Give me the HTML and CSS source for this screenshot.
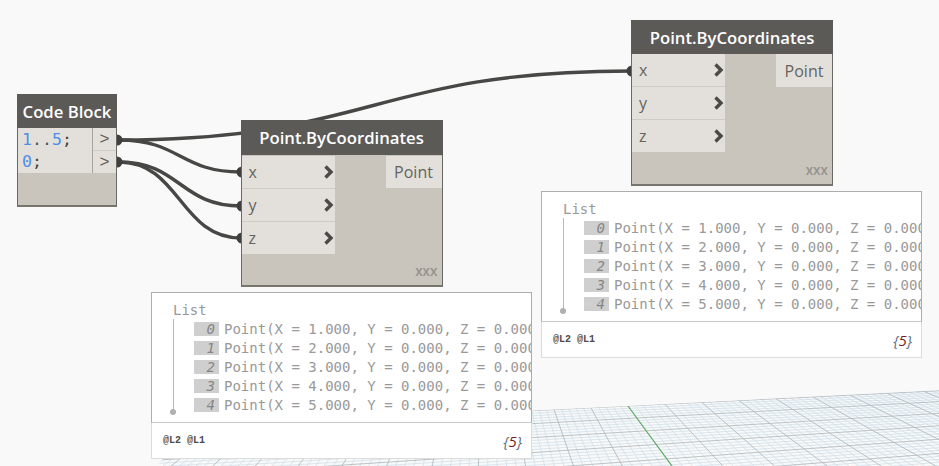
FILE: index.html
```html
<!DOCTYPE html>
<html lang="en">
<head>
<meta charset="utf-8">
<title>Point.ByCoordinates</title>
<link rel="stylesheet" href="styles.css">
</head>
<body>
<main class="canvas">
  <svg class="grid" id="grid" width="939" height="466" viewBox="0 0 939 466" aria-hidden="true"></svg>

  <svg class="wires" width="939" height="466" viewBox="0 0 939 466" aria-hidden="true">
    <path class="wire" d="M119 140C370 140 375 71 631 71"/>
    <path class="wire" d="M119 140C180 140 180 172 241 172"/>
    <path class="wire" d="M119 162C180 162 180 206 241 206"/>
    <path class="wire" d="M119 162C180 162 180 238 241 238"/>
    <path class="dot" d="M117 134.500a5.500 5.500 0 0 1 0 11zM117 156.500a5.500 5.500 0 0 1 0 11z"/>
    <path class="dot" d="M242 166.500a5.500 5.500 0 0 0 0 11zM242 200.500a5.500 5.500 0 0 0 0 11zM242 232.500a5.500 5.500 0 0 0 0 11zM632 65.500a5.500 5.500 0 0 0 0 11z"/>
  </svg>

  <section class="node code-node">
    <header class="node-title">Code Block</header>
    <div class="code-body">
      <div class="code-text">
        <div class="code-line"><span class="num">1</span>..<span class="num">5</span><span class="semi">;</span></div>
        <div class="code-line"><span class="num">0</span><span class="semi">;</span></div>
      </div>
      <div class="code-ports">
        <div class="code-port">&gt;</div>
        <div class="code-port">&gt;</div>
      </div>
    </div>
  </section>

  <section class="node point-node point-a">
    <header class="node-title">Point.ByCoordinates</header>
    <div class="point-body">
      <div class="inputs">
        <div class="input"><span>x</span><svg class="chev" viewBox="0 0 10 14"><path d="M2 1.500l5.500 5.500-5.500 5.500"/></svg></div>
        <div class="input"><span>y</span><svg class="chev" viewBox="0 0 10 14"><path d="M2 1.500l5.500 5.500-5.500 5.500"/></svg></div>
        <div class="input"><span>z</span><svg class="chev" viewBox="0 0 10 14"><path d="M2 1.500l5.500 5.500-5.500 5.500"/></svg></div>
      </div>
      <div class="output">Point</div>
      <div class="lacing">xxx</div>
    </div>
  </section>

  <section class="node point-node point-b">
    <header class="node-title">Point.ByCoordinates</header>
    <div class="point-body">
      <div class="inputs">
        <div class="input"><span>x</span><svg class="chev" viewBox="0 0 10 14"><path d="M2 1.500l5.500 5.500-5.500 5.500"/></svg></div>
        <div class="input"><span>y</span><svg class="chev" viewBox="0 0 10 14"><path d="M2 1.500l5.500 5.500-5.500 5.500"/></svg></div>
        <div class="input"><span>z</span><svg class="chev" viewBox="0 0 10 14"><path d="M2 1.500l5.500 5.500-5.500 5.500"/></svg></div>
      </div>
      <div class="output">Point</div>
      <div class="lacing">xxx</div>
    </div>
  </section>

  <section class="watch watch-a">
    <div class="watch-main">
      <div class="list-name">List</div>
      <ol class="items">
        <li class="item"><i class="idx">0</i><span class="val">Point(X = 1.000, Y = 0.000, Z = 0.000)</span></li>
        <li class="item"><i class="idx">1</i><span class="val">Point(X = 2.000, Y = 0.000, Z = 0.000)</span></li>
        <li class="item"><i class="idx">2</i><span class="val">Point(X = 3.000, Y = 0.000, Z = 0.000)</span></li>
        <li class="item"><i class="idx">3</i><span class="val">Point(X = 4.000, Y = 0.000, Z = 0.000)</span></li>
        <li class="item"><i class="idx">4</i><span class="val">Point(X = 5.000, Y = 0.000, Z = 0.000)</span></li>
      </ol>
    </div>
    <footer class="watch-foot"><span class="levels">@L2 @L1</span><span class="count">{<b>5</b>}</span></footer>
  </section>

  <section class="watch watch-b">
    <div class="watch-main">
      <div class="list-name">List</div>
      <ol class="items">
        <li class="item"><i class="idx">0</i><span class="val">Point(X = 1.000, Y = 0.000, Z = 0.000)</span></li>
        <li class="item"><i class="idx">1</i><span class="val">Point(X = 2.000, Y = 0.000, Z = 0.000)</span></li>
        <li class="item"><i class="idx">2</i><span class="val">Point(X = 3.000, Y = 0.000, Z = 0.000)</span></li>
        <li class="item"><i class="idx">3</i><span class="val">Point(X = 4.000, Y = 0.000, Z = 0.000)</span></li>
        <li class="item"><i class="idx">4</i><span class="val">Point(X = 5.000, Y = 0.000, Z = 0.000)</span></li>
      </ol>
    </div>
    <footer class="watch-foot"><span class="levels">@L2 @L1</span><span class="count">{<b>5</b>}</span></footer>
  </section>
</main>
<script src="grid.js"></script>
</body>
</html>
```
FILE: styles.css
```css
* { box-sizing: border-box; }
html, body { margin: 0; padding: 0; height: 100%; background: #f9f9f9; overflow: hidden; }
.canvas { position: relative; width: 939px; height: 466px; overflow: hidden; font-family: "Open Sans", sans-serif; }

.grid, .wires { position: absolute; left: 0; top: 0; }
.wire { fill: none; stroke: #474745; stroke-width: 3.4; }
.dot { fill: #3f3f3d; }
.g-minor { stroke: #cbdde8; stroke-width: .7; fill: none; }
.g-major { stroke: #aab5bb; stroke-width: .8; fill: none; }
.g-axis { stroke: #5bab5f; stroke-width: 1.1; fill: none; }

.node { position: absolute; display: flex; flex-direction: column; background: #c9c5bd; border: 1px solid #6a6863; border-top: 0; border-bottom: 2px solid #77746e; }
.node-title { flex: none; display: flex; align-items: center; justify-content: center; margin: 0 -1px; background: #5c5a57; color: #fff; font-weight: 600; font-size: 16.7px; white-space: nowrap; }

.code-node { left: 17px; top: 94px; width: 100px; height: 113px; }
.code-node .node-title { height: 34px; }
.code-body { display: flex; height: 45px; background: #e3e0db; }
.code-text { flex: 1; padding: 1px 0 0 4px; font: 16.6px/22.5px "DejaVu Sans Mono", monospace; color: #55534f; }
.code-line { height: 22px; white-space: pre; }
.num { color: #4f8fe8; }
.semi { color: #4a4030; }
.code-ports { width: 24px; border-left: 1px solid #a8a59f; display: flex; flex-direction: column; }
.code-port { flex: 1; display: flex; align-items: center; justify-content: center; font: 17px "Liberation Sans", sans-serif; color: #5f5d5a; }
.code-port + .code-port { border-top: 1px solid #cfccc6; }

.point-node { width: 202px; height: 167px; }
.point-a { left: 240.500px; top: 120px; }
.point-b { left: 631px; top: 20px; height: 166px; }
.point-node .node-title { height: 35px; }
.point-b .node-title { height: 34px; }
.point-body { position: relative; flex: 1; display: flex; justify-content: space-between; align-items: flex-start; padding-top: 1px; }
.point-b .point-body { padding-top: 0; }
.inputs { width: 93px; display: flex; flex-direction: column; }
.input { height: 33px; padding: 0 1px 0 7px; display: flex; align-items: center; justify-content: space-between; background: #e3e0db; border-bottom: 1px solid #cfccc5; color: #66645f; font-size: 16px; }
.input:last-child { border-bottom: 0; height: 32px; }
.chev { width: 11px; height: 14px; }
.chev path { fill: none; stroke: #4a4a48; stroke-width: 3.4; }
.output { width: 56px; height: 32px; display: flex; align-items: center; justify-content: center; background: #e3e0db; color: #66645f; font-size: 16px; }
.point-b .output { height: 33px; }
.lacing { position: absolute; right: 4px; bottom: 8px; font-size: 13.500px; line-height: 12px; font-weight: 600; color: #96938d; }

.watch { position: absolute; width: 381px; height: 167px; display: flex; flex-direction: column; background: #fff; border: 1px solid #dcdcdc; }
.watch-a { left: 151px; top: 292px; }
.watch-b { left: 541px; top: 191px; }
.watch-main { height: 131px; flex: none; margin: -1px -1px 0; border: 1px solid #adadad; border-bottom: 1px solid #c9c9c9; padding: 10px 0 0 21px; overflow: hidden; font-family: "DejaVu Sans Mono", monospace; }
.list-name { font-size: 14px; line-height: 15px; color: #999; }
.items { position: relative; list-style: none; margin: 1px 0 0; padding: 0 0 0 21px; }
.items::before { content: ""; position: absolute; left: 0; top: 0; bottom: 3px; width: 1px; background: #b8b8b8; }
.items::after { content: ""; position: absolute; left: -3px; bottom: 0; width: 6px; height: 6px; border-radius: 50%; background: #b0b0b0; }
.item { display: flex; align-items: center; height: 19.200px; white-space: nowrap; font-size: 14px; color: #999; }
.idx { flex: none; width: 25px; height: 14px; margin-right: 5px; padding-right: 4px; text-align: right; line-height: 14px; font-size: 14px; background: #cfcfcf; color: #858585; }
.val { flex: none; }
.watch-foot { flex: 1; display: flex; align-items: center; justify-content: space-between; padding: 0 9px 0 11px; }
.levels { font: 700 10px "Liberation Mono", monospace; color: #4c4c4c; }
.count { font: italic 15px "Open Sans", sans-serif; color: #5d6f85; }
.count b { font-weight: 400; color: #7a1f1f; }
```
FILE: grid.js
```js
(function () {
  var svg = document.getElementById('grid');
  var NS = 'http://www.w3.org/2000/svg';
  var vb = [486, 213], va = [3000, 290];
  var defs = document.createElementNS(NS, 'clipPath');
  defs.setAttribute('id', 'floor');
  var poly = document.createElementNS(NS, 'polygon');
  poly.setAttribute('points', '157,466 190,427 628,406 939,390 939,466');
  defs.appendChild(poly);
  svg.appendChild(defs);
  var g = document.createElementNS(NS, 'g');
  g.setAttribute('clip-path', 'url(#floor)');
  var minor = '', major = '', i, x, y, s, seg;
  // lines fanning out from the vanishing point above the floor
  for (i = -70; i <= 70; i++) {
    x = 628 + 7.4 * i;
    y = 406 - 0.049 * (x - 628);
    s = (470 - vb[1]) / (y - vb[1]);
    seg = 'M' + x.toFixed(1) + ' ' + y.toFixed(1) + 'L' + (vb[0] + (x - vb[0]) * s * 1.6).toFixed(1) + ' ' + (vb[1] + (y - vb[1]) * s * 1.6).toFixed(1);
    if (i % 5 === 0) major += seg; else minor += seg;
  }
  // nearly horizontal lines running to the far right vanishing point
  for (i = 0; i <= 30; i++) {
    var t = i / 5;
    y = 406 + 12 * t * (1 + 0.04 * t);
    var x0 = 100, y0 = va[1] + (y - va[1]) * (va[0] - x0) / (va[0] - 628);
    var x1 = 939, y1 = va[1] + (y - va[1]) * (va[0] - x1) / (va[0] - 628);
    seg = 'M' + x0 + ' ' + y0.toFixed(1) + 'L' + x1 + ' ' + y1.toFixed(1);
    if (i % 5 === 0) major += seg; else minor += seg;
  }
  function line(cls, d) {
    var p = document.createElementNS(NS, 'path');
    p.setAttribute('class', cls);
    p.setAttribute('d', d);
    g.appendChild(p);
  }
  line('g-minor', minor);
  line('g-major', major);
  line('g-axis', 'M628 406L672 466');
  svg.appendChild(g);
})();
```
